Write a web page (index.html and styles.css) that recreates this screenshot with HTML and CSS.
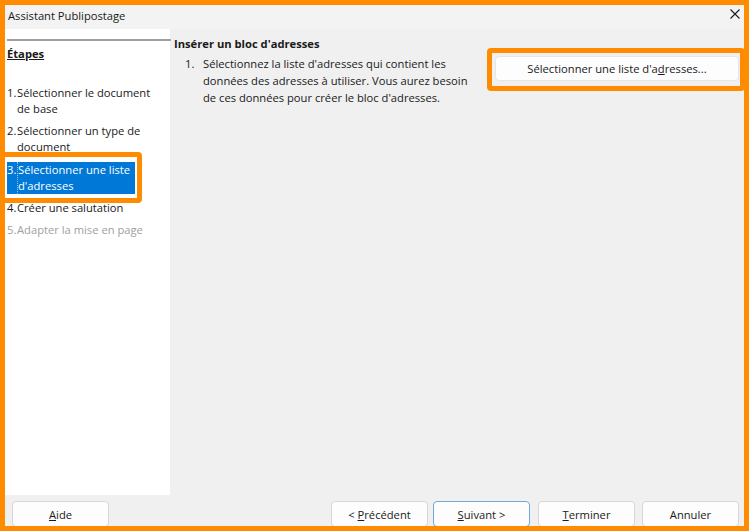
FILE: index.html
```html
<!DOCTYPE html>
<html lang="fr">
<head>
    <meta charset="UTF-8">
    <title>Assistant Publipostage</title>
    <link rel="stylesheet" href="styles.css">
</head>
<body>
    <div class="window">
        <div class="titlebar">
            <span class="title">Assistant Publipostage</span>
            <svg class="close" width="10" height="10" viewBox="0 0 10 10">
                <path d="M0.5 0.5 L9.5 9.5 M9.5 0.5 L0.5 9.5" stroke="#1a1a1a" stroke-width="1.1" fill="none"/>
            </svg>
        </div>
        <div class="main">
            <div class="steps">
                <div class="steps-rule"></div>
                <div class="steps-title">Étapes</div>
                <ol class="step-list">
                    <li><span class="num">1.</span><span class="label">Sélectionner le document de base</span></li>
                    <li><span class="num">2.</span><span class="label">Sélectionner un type de document</span></li>
                    <li class="current"><span class="num">3.</span><span class="label">Sélectionner une liste d'adresses</span></li>
                    <li><span class="num">4.</span><span class="label">Créer une salutation</span></li>
                    <li class="disabled"><span class="num">5.</span><span class="label">Adapter la mise en page</span></li>
                </ol>
            </div>
            <div class="page">
                <div class="page-rule"></div>
                <div class="page-body">
                    <div class="intro">
                        <h2>Insérer un bloc d'adresses</h2>
                        <div class="instruction">
                            <span class="num">1.</span>
                            <p>Sélectionnez la liste d'adresses qui contient les données des adresses à utiliser. Vous aurez besoin de ces données pour créer le bloc d'adresses.</p>
                        </div>
                    </div>
                    <button class="btn btn-wide">Sélectionner une liste d'a<u>d</u>resses...</button>
                </div>
            </div>
        </div>
        <div class="buttons">
            <button class="btn"><u>A</u>ide</button>
            <div class="nav">
                <button class="btn">&lt; <u>P</u>récédent</button>
                <button class="btn default"><u>S</u>uivant &gt;</button>
                <button class="btn"><u>T</u>erminer</button>
                <button class="btn">Annuler</button>
            </div>
        </div>

        <div class="frame"></div>
        <div class="mark mark-step"></div>
        <div class="mark mark-button"></div>
    </div>
</body>
</html>
```

FILE: styles.css
```css
body {
    margin: 0;
    font-family: "Open Sans", "Noto Sans", sans-serif;
    font-size: 11.2px;
    color: #1a1a1a;
}
.window {
    position: relative;
    width: 749px;
    height: 531px;
    overflow: hidden;
    background-color: #f0f0f0;
}
.titlebar {
    height: 29px;
    display: flex;
    align-items: center;
    justify-content: space-between;
    padding: 0 9px 0 8px;
    background-color: #f3f3f3;
}
.title {
    padding-top: 1px;
}
.close {
    margin-top: -1px;
}
.main {
    display: flex;
    height: 466px;
}
.steps {
    width: 163px;
    padding-left: 7px;
    background-color: #fff;
}
.steps-rule, .page-rule {
    height: 2px;
    margin-top: 10px;
    background-color: #a0a0a0;
}
.page-rule {
    width: 1px;
}
.steps-title {
    margin-top: 5px;
    font-weight: bold;
    text-decoration: underline;
    line-height: 16px;
}
.step-list {
    list-style: none;
    margin: 23px 0 0;
    padding: 0;
    line-height: 16px;
}
.step-list li {
    display: flex;
    width: 150px;
    margin-bottom: 6px;
}
.step-list .num {
    width: 10px;
    flex-shrink: 0;
}
.step-list .current {
    width: auto;
    margin-top: 7px;
}
.step-list .current .num,
.step-list .current .label {
    background-color: #0078d7;
    color: #fff;
}
.step-list .current .label {
    width: 117px;
    border-left: 1px dotted #8fc3ee;
}
.step-list .disabled {
    color: #a0a0a0;
}
.page {
    flex: 1;
    display: flex;
}
.page-body {
    flex: 1;
    display: flex;
    align-items: flex-start;
    padding: 5px 6px 0 3px;
}
.intro {
    width: 310px;
}
h2 {
    margin: 2px 0 3px;
    font-size: 11.2px;
    line-height: 16px;
}
.instruction {
    display: flex;
    line-height: 17px;
    padding-left: 11px;
}
.instruction .num {
    width: 18px;
    flex-shrink: 0;
}
.instruction p {
    margin: 0;
    width: 275px;
}
.btn {
    font-family: inherit;
    font-size: 11.2px;
    color: #1a1a1a;
    height: 26px;
    width: 97px;
    padding: 0;
    background-color: #fdfdfd;
    border: 1px solid #d6d6d6;
    border-radius: 4px;
}
.btn-wide {
    width: 244px;
    height: 25px;
    margin: 22px 0 0 11px;
    border-color: #e6e6e6;
}
.btn.default {
    border-color: #6fa9dc;
}
.buttons {
    display: flex;
    justify-content: space-between;
    padding: 6px 10px 0 12px;
}
.nav {
    display: flex;
    gap: 7px;
}
.nav .btn:first-child {
    margin-right: -2px;
}
.nav .btn:nth-child(2) {
    margin-right: 1px;
}
.frame {
    position: absolute;
    inset: 0;
    border: 5px solid #ff8c00;
    pointer-events: none;
}
.mark {
    position: absolute;
    border: 5px solid #ff8c00;
    border-radius: 4px;
}
.mark-step {
    left: 0;
    top: 152px;
    width: 132px;
    height: 41px;
}
.mark-button {
    left: 487px;
    top: 48px;
    width: 248px;
    height: 33px;
}
```
